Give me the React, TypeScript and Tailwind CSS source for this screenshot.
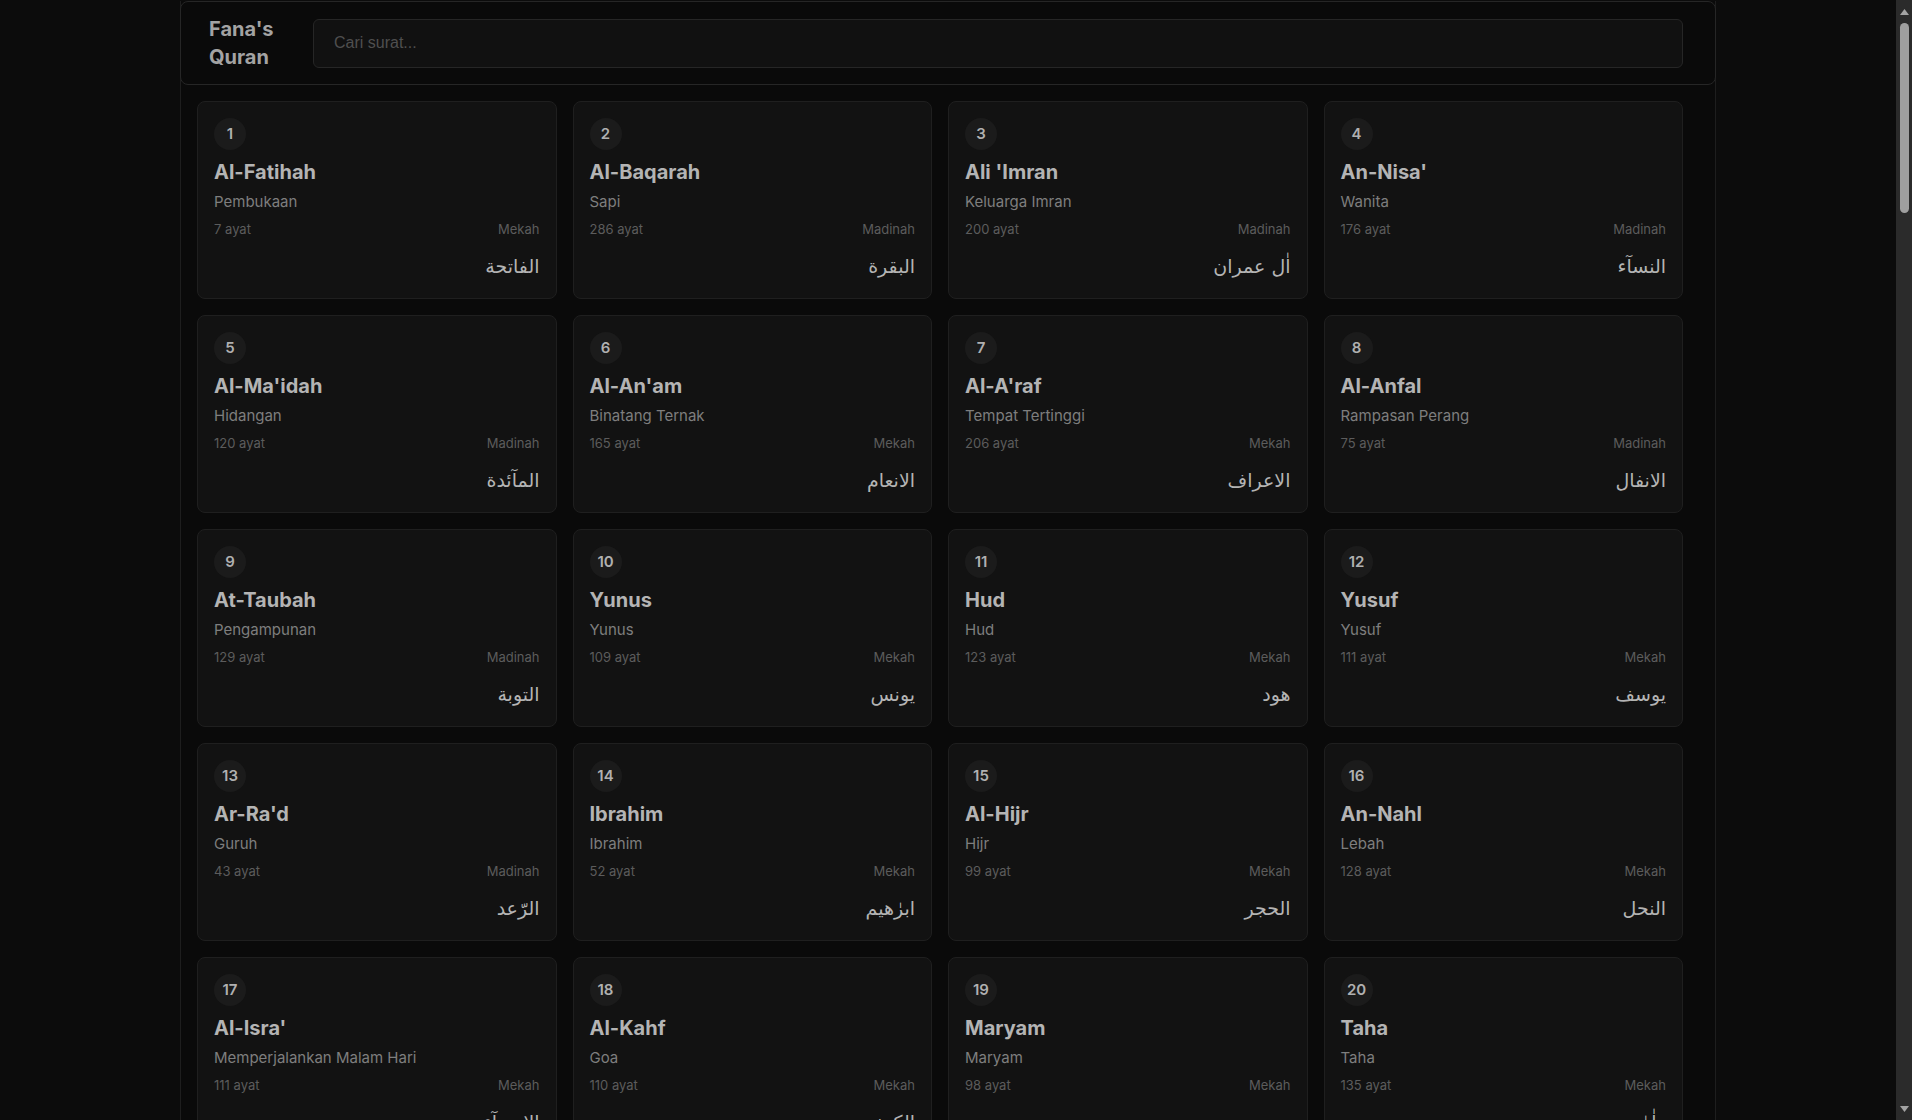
import React from "react";

type S = [string, string, number, string, string];

const SURAH: S[] = [
  ["Al-Fatihah", "Pembukaan", 7, "Mekah", "الفاتحة"],
  ["Al-Baqarah", "Sapi", 286, "Madinah", "البقرة"],
  ["Ali 'Imran", "Keluarga Imran", 200, "Madinah", "اٰل عمران"],
  ["An-Nisa'", "Wanita", 176, "Madinah", "النسآء"],
  ["Al-Ma'idah", "Hidangan", 120, "Madinah", "المآئدة"],
  ["Al-An'am", "Binatang Ternak", 165, "Mekah", "الانعام"],
  ["Al-A'raf", "Tempat Tertinggi", 206, "Mekah", "الاعراف"],
  ["Al-Anfal", "Rampasan Perang", 75, "Madinah", "الانفال"],
  ["At-Taubah", "Pengampunan", 129, "Madinah", "التوبة"],
  ["Yunus", "Yunus", 109, "Mekah", "يونس"],
  ["Hud", "Hud", 123, "Mekah", "هود"],
  ["Yusuf", "Yusuf", 111, "Mekah", "يوسف"],
  ["Ar-Ra'd", "Guruh", 43, "Madinah", "الرّعد"],
  ["Ibrahim", "Ibrahim", 52, "Mekah", "ابرٰهيم"],
  ["Al-Hijr", "Hijr", 99, "Mekah", "الحجر"],
  ["An-Nahl", "Lebah", 128, "Mekah", "النحل"],
  ["Al-Isra'", "Memperjalankan Malam Hari", 111, "Mekah", "الاسرآء"],
  ["Al-Kahf", "Goa", 110, "Mekah", "الكهف"],
  ["Maryam", "Maryam", 98, "Mekah", "مريم"],
  ["Taha", "Taha", 135, "Mekah", "طٰهٰ"],
  ["Al-Anbiya'", "Para Nabi", 112, "Mekah", "الانبيآء"],
  ["Al-Hajj", "Haji", 78, "Madinah", "الحج"],
  ["Al-Mu'minun", "Orang-Orang Mukmin", 118, "Mekah", "المؤمنون"],
  ["An-Nur", "Cahaya", 64, "Madinah", "النّور"],
  ["Al-Furqan", "Pembeda", 77, "Mekah", "الفرقان"],
  ["Asy-Syu'ara'", "Para Penyair", 227, "Mekah", "الشعرآء"],
  ["An-Naml", "Semut-semut", 93, "Mekah", "النمل"],
  ["Al-Qasas", "Kisah-Kisah", 88, "Mekah", "القصص"],
  ["Al-'Ankabut", "Laba-Laba", 69, "Mekah", "العنكبوت"],
  ["Ar-Rum", "Bangsa Romawi", 60, "Mekah", "الرّوم"],
  ["Luqman", "Luqman", 34, "Mekah", "لقمٰن"],
  ["As-Sajdah", "Sajdah", 30, "Mekah", "السّجدة"],
  ["Al-Ahzab", "Golongan Yang Bersekutu", 73, "Madinah", "الاحزاب"],
  ["Saba'", "Saba'", 54, "Mekah", "سبأ"],
  ["Fatir", "Pencipta", 45, "Mekah", "فاطر"],
  ["Yasin", "Yasin", 83, "Mekah", "يٰس"],
  ["As-Saffat", "Barisan-Barisan", 182, "Mekah", "الصّٰفّٰت"],
  ["Sad", "Sad", 88, "Mekah", "ص"],
  ["Az-Zumar", "Rombongan", 75, "Mekah", "الزمر"],
  ["Gafir", "Maha Pengampun", 85, "Mekah", "غافر"],
  ["Fussilat", "Yang Dijelaskan", 54, "Mekah", "فصّلت"],
  ["Asy-Syura", "Musyawarah", 53, "Mekah", "الشورى"],
  ["Az-Zukhruf", "Perhiasan", 89, "Mekah", "الزخرف"],
  ["Ad-Dukhan", "Kabut", 59, "Mekah", "الدخان"],
  ["Al-Jasiyah", "Yang Berlutut", 37, "Mekah", "الجاثية"],
  ["Al-Ahqaf", "Bukit Pasir", 35, "Mekah", "الاحقاف"],
  ["Muhammad", "Nabi Muhammad", 38, "Madinah", "محمّد"],
  ["Al-Fath", "Kemenangan", 29, "Madinah", "الفتح"],
  ["Al-Hujurat", "Kamar-Kamar", 18, "Madinah", "الحجرٰت"],
  ["Qaf", "Qaf", 45, "Mekah", "ق"],
  ["Az-Zariyat", "Angin yang Menerbangkan", 60, "Mekah", "الذّٰريٰت"],
  ["At-Tur", "Bukit Tursina", 49, "Mekah", "الطّور"],
  ["An-Najm", "Bintang", 62, "Mekah", "النجم"],
  ["Al-Qamar", "Bulan", 55, "Mekah", "القمر"],
  ["Ar-Rahman", "Yang Maha Pengasih", 78, "Madinah", "الرحمن"],
  ["Al-Waqi'ah", "Hari Kiamat", 96, "Mekah", "الواقعة"],
  ["Al-Hadid", "Besi", 29, "Madinah", "الحديد"],
  ["Al-Mujadilah", "Gugatan", 22, "Madinah", "المجادلة"],
  ["Al-Hasyr", "Pengusiran", 24, "Madinah", "الحشر"],
  ["Al-Mumtahanah", "Wanita Yang Diuji", 13, "Madinah", "الممتحنة"],
  ["As-Saff", "Satu Barisan", 14, "Madinah", "الصّفّ"],
  ["Al-Jumu'ah", "Jumat", 11, "Madinah", "الجمعة"],
  ["Al-Munafiqun", "Orang-orang Munafik", 11, "Madinah", "المنٰفقون"],
  ["At-Tagabun", "Pengungkapan Kesalahan", 18, "Madinah", "التغابن"],
  ["At-Talaq", "Talak", 12, "Madinah", "الطلاق"],
  ["At-Tahrim", "Pengharaman", 12, "Madinah", "التحريم"],
  ["Al-Mulk", "Kerajaan", 30, "Mekah", "الملك"],
  ["Al-Qalam", "Pena", 52, "Mekah", "القلم"],
  ["Al-Haqqah", "Hari Kiamat", 52, "Mekah", "الحآقّة"],
  ["Al-Ma'arij", "Tempat Naik", 44, "Mekah", "المعارج"],
  ["Nuh", "Nuh", 28, "Mekah", "نوح"],
  ["Al-Jinn", "Jin", 28, "Mekah", "الجن"],
  ["Al-Muzzammil", "Orang Yang Berselimut", 20, "Mekah", "المزّمّل"],
  ["Al-Muddassir", "Orang Yang Berkemul", 56, "Mekah", "المدّثّر"],
  ["Al-Qiyamah", "Hari Kiamat", 40, "Mekah", "القيٰمة"],
  ["Al-Insan", "Manusia", 31, "Madinah", "الانسان"],
  ["Al-Mursalat", "Malaikat Yang Diutus", 50, "Mekah", "المرسلٰت"],
  ["An-Naba'", "Berita Besar", 40, "Mekah", "النبأ"],
  ["An-Nazi'at", "Malaikat Yang Mencabut", 46, "Mekah", "النّٰزعٰت"],
  ["'Abasa", "Bermuka Masam", 42, "Mekah", "عبس"],
  ["At-Takwir", "Penggulungan", 29, "Mekah", "التكوير"],
  ["Al-Infitar", "Terbelah", 19, "Mekah", "الانفطار"],
  ["Al-Mutaffifin", "Orang-orang Curang", 36, "Mekah", "المطفّفين"],
  ["Al-Insyiqaq", "Terbelah", 25, "Mekah", "الانشقاق"],
  ["Al-Buruj", "Gugusan Bintang", 22, "Mekah", "البروج"],
  ["At-Tariq", "Yang Datang Pada Malam Hari", 17, "Mekah", "الطارق"],
  ["Al-A'la", "Yang Paling Tinggi", 19, "Mekah", "الاعلى"],
  ["Al-Gasyiyah", "Hari Pembalasan", 26, "Mekah", "الغاشية"],
  ["Al-Fajr", "Fajar", 30, "Mekah", "الفجر"],
  ["Al-Balad", "Negeri", 20, "Mekah", "البلد"],
  ["Asy-Syams", "Matahari", 15, "Mekah", "الشمس"],
  ["Al-Lail", "Malam", 21, "Mekah", "الّيل"],
  ["Ad-Duha", "Duha", 11, "Mekah", "الضحى"],
  ["Asy-Syarh", "Lapang", 8, "Mekah", "الشرح"],
  ["At-Tin", "Buah Tin", 8, "Mekah", "التين"],
  ["Al-'Alaq", "Segumpal Darah", 19, "Mekah", "العلق"],
  ["Al-Qadr", "Kemuliaan", 5, "Mekah", "القدر"],
  ["Al-Bayyinah", "Bukti Nyata", 8, "Madinah", "البيّنة"],
  ["Az-Zalzalah", "Guncangan", 8, "Madinah", "الزلزلة"],
  ["Al-'Adiyat", "Kuda Yang Berlari Kencang", 11, "Mekah", "العٰديٰت"],
  ["Al-Qari'ah", "Hari Kiamat", 11, "Mekah", "القارعة"],
  ["At-Takasur", "Bermegah-megahan", 8, "Mekah", "التكاثر"],
  ["Al-'Asr", "Asar", 3, "Mekah", "العصر"],
  ["Al-Humazah", "Pengumpat", 9, "Mekah", "الهمزة"],
  ["Al-Fil", "Gajah", 5, "Mekah", "الفيل"],
  ["Quraisy", "Suku Quraisy", 4, "Mekah", "قريش"],
  ["Al-Ma'un", "Barang Yang Berguna", 7, "Mekah", "الماعون"],
  ["Al-Kausar", "Pemberian Yang Banyak", 3, "Mekah", "الكوثر"],
  ["Al-Kafirun", "Orang-Orang kafir", 6, "Mekah", "الكٰفرون"],
  ["An-Nasr", "Pertolongan", 3, "Madinah", "النصر"],
  ["Al-Lahab", "Api Yang Bergejolak", 5, "Mekah", "اللهب"],
  ["Al-Ikhlas", "Ikhlas", 4, "Mekah", "الاخلاص"],
  ["Al-Falaq", "Subuh", 5, "Mekah", "الفلق"],
  ["An-Nas", "Manusia", 6, "Mekah", "الناس"],
];

function Card({ n, s }: { n: number; s: S }) {
  return (
    <div className="flex flex-col rounded-lg border border-[#1f1f1f] bg-[#121212] p-4">
      <div className="flex h-8 w-8 items-center justify-center rounded-full bg-[#1b1b1b] text-[15px] font-semibold text-[#b0b0b0]">
        {n}
      </div>
      <div className="mt-2 text-[20px] font-bold leading-7 text-[#b4b4b4]">{s[0]}</div>
      <div className="mt-1.5 text-[15px] leading-5 text-[#7e7e7e]">{s[1]}</div>
      <div className="mt-2 flex items-center justify-between text-[13px] leading-[18px] text-[#5c5c5c]">
        <span>{s[2]} ayat</span>
        <span>{s[3]}</span>
      </div>
      <div
        dir="rtl"
        className="mt-3 text-right text-[19px] leading-8 text-[#b4b4b4] [font-family:'DejaVu_Sans',sans-serif]"
      >
        {s[4]}
      </div>
    </div>
  );
}

function FakeScrollbar() {
  return (
    <div className="flex w-4 shrink-0 flex-col items-center bg-[#2b2b2b] pt-[9px] pb-[8px]">
      <svg width="9" height="6" viewBox="0 0 9 6">
        <path d="M4.5 0 L9 6 L0 6 Z" fill="#a3a3a3" />
      </svg>
      <div className="mt-[8px] h-[190px] w-[9px] rounded-full bg-[#9f9f9f]" />
      <div className="flex-1" />
      <svg width="9" height="6" viewBox="0 0 9 6">
        <path d="M0 0 L9 0 L4.5 6 Z" fill="#a3a3a3" />
      </svg>
    </div>
  );
}

export default function App() {
  return (
    <div className="flex h-screen bg-[#0c0c0c] [font-family:Inter,'Noto_Sans',sans-serif]">
      <div className="min-w-0 flex-1 overflow-y-auto [scrollbar-width:none]">
        <div className="mx-auto min-h-full w-[1536px] border-x border-[#1e1e1e] bg-[#0a0a0a]">
          <header className="-mx-px mt-px flex items-center gap-[37px] rounded-lg border border-[#262626] bg-[#0a0a0a] py-[13px] pl-[28px] pr-8">
            <div className="w-[67px] shrink-0 text-[20px] font-bold leading-7 text-[#a3a3a3]">
              Fana's Quran
            </div>
            <input
              type="text"
              placeholder="Cari surat..."
              className="h-[49px] flex-1 rounded-md border border-[#262626] bg-[#111111] px-5 text-[16px] text-[#aaaaaa] outline-none placeholder:text-[#4f4f4f] [font-family:'Liberation_Sans',Arial,sans-serif]"
            />
          </header>
          <main className="grid grid-cols-4 gap-4 pb-8 pl-4 pr-8 pt-4">
            {SURAH.map((s, i) => (
              <Card key={i} n={i + 1} s={s} />
            ))}
          </main>
        </div>
      </div>
      <FakeScrollbar />
    </div>
  );
}
